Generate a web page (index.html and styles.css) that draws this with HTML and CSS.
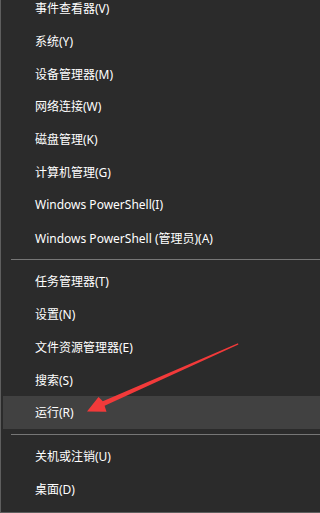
FILE: index.html
```
<!DOCTYPE html>
<html lang="zh-CN">
<head>
<meta charset="utf-8">
<title>Win+X 菜单</title>
<link rel="stylesheet" href="styles.css">
</head>
<body>
<div class="frame">
  <div class="menu">
    <div class="item">事件查看器(V)</div>
    <div class="item">系统(Y)</div>
    <div class="item">设备管理器(M)</div>
    <div class="item">网络连接(W)</div>
    <div class="item">磁盘管理(K)</div>
    <div class="item">计算机管理(G)</div>
    <div class="item">Windows PowerShell(I)</div>
    <div class="item">Windows PowerShell (管理员)(A)</div>
    <div class="sep"></div>
    <div class="item">任务管理器(T)</div>
    <div class="item">设置(N)</div>
    <div class="item">文件资源管理器(E)</div>
    <div class="item">搜索(S)</div>
    <div class="item active">运行(R)</div>
    <div class="sep"></div>
    <div class="item">关机或注销(U)</div>
    <div class="item">桌面(D)</div>
  </div>
  <svg class="arrow" width="277" height="513" viewBox="0 0 277 513" xmlns="http://www.w3.org/2000/svg">
    <polygon fill="#f23a3a" points="237,343.3 101.8,401.2 97.5,397 86,411.5 105.5,411.8 103.6,405.8 237.4,344.4"/>
  </svg>
</div>
</body>
</html>
```
FILE: styles.css
```
html, body {
  margin: 0;
  padding: 0;
  background: #2b2b2b;
}
.frame {
  position: relative;
  width: 100%;
  height: 513px;
  overflow: hidden;
  box-sizing: border-box;
  background: #2b2b2b;
  border-left: 1px solid #5e5e5e;
  border-bottom: 1px solid #5e5e5e;
}
.menu {
  display: flex;
  flex-direction: column;
  margin-top: -8.4px;
  padding-left: 2px;
}
.item {
  height: 32.8px;
  display: flex;
  align-items: center;
  padding-left: 32px;
  font-family: "Noto Sans", "Noto Sans CJK SC", sans-serif;
  font-size: 12px;
  color: #ffffff;
  white-space: nowrap;
}
.item.active {
  background: #414141;
}
.sep {
  height: 1px;
  background: #767676;
  margin: 5px 0 4.8px 8px;
}
.arrow {
  position: absolute;
  left: 0;
  top: 0;
  pointer-events: none;
}
```
